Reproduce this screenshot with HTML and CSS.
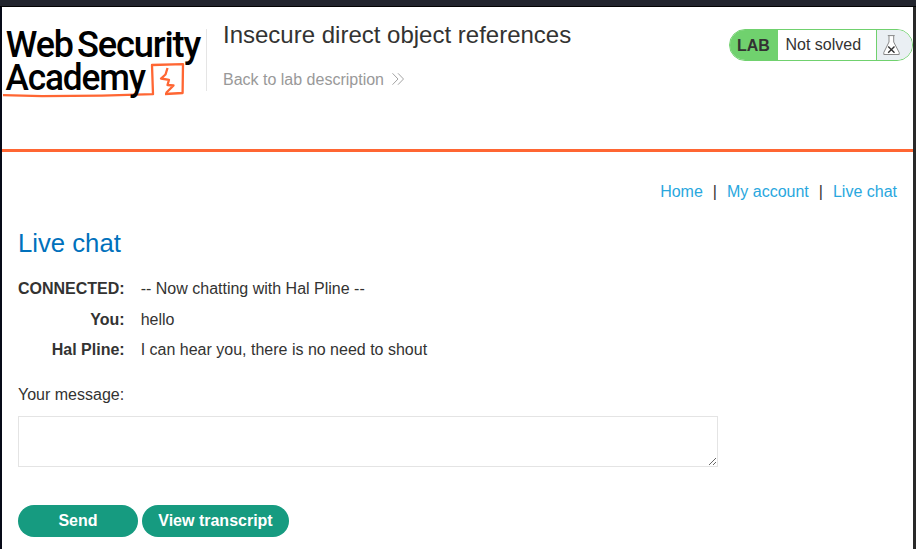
FILE: index.html
```html
<!DOCTYPE html>
<html lang="en">
<head>
<meta charset="utf-8">
<title>Insecure direct object references</title>
<link rel="stylesheet" href="styles.css">
</head>
<body>
<div class="window-edge"></div>
<div class="page">
  <header class="lab-header">
    <svg class="logo" width="204" height="74" viewBox="0 0 204 74" role="img" aria-label="Web Security Academy">
      <path class="logo-line" d="M1 66.2 L40 67.2 L100 66.6 L151 65.200 L150 36 L181 35.2 L180.6 64 L163 65"/>
      <path class="logo-bolt" d="M165.500 39 L163.500 45.500 L159 49.500 L167 50.800 L165.500 56 L171.500 56.500 L164 64"/>
      <text x="3.800" y="28.300" textLength="67" lengthAdjust="spacingAndGlyphs">Web</text>
      <text x="75" y="28.300" textLength="123" lengthAdjust="spacingAndGlyphs">Security</text>
      <text x="3.500" y="60.800" textLength="139.500" lengthAdjust="spacingAndGlyphs">Academy</text>
    </svg>
    <div class="title-box">
      <h2>Insecure direct object references</h2>
      <a class="back">Back to lab description
        <svg width="12" height="12" viewBox="0 0 12 12"><path d="M.5 .3 L6 6 L.5 11.700 M6 .3 L11.500 6 L6 11.700"/></svg>
      </a>
    </div>
    <div class="status">
      <span class="status-tag">LAB</span>
      <span class="status-text">Not solved</span>
      <span class="status-icon">
        <svg width="17" height="21" viewBox="0 0 17 21">
          <path class="flask" d="M4.800 .6 H11.700 M6 .6 V7 L.8 17.500 V19.500 H16.200 V17.500 L10.700 7 V.6"/>
          <path class="cross" d="M5.200 11.500 L11.500 17.700 M11.500 11.500 L5.200 17.700"/>
        </svg>
      </span>
    </div>
  </header>
  <main>
    <nav><a>Home</a><span>|</span><a>My account</a><span>|</span><a>Live chat</a></nav>
    <h1>Live chat</h1>
    <table>
      <tr><th>CONNECTED:</th><td>-- Now chatting with Hal Pline --</td></tr>
      <tr><th>You:</th><td>hello</td></tr>
      <tr><th>Hal Pline:</th><td>I can hear you, there is no need to shout</td></tr>
    </table>
    <label for="message">Your message:</label>
    <textarea id="message"></textarea>
    <div class="actions"><button class="send">Send</button><button>View transcript</button></div>
  </main>
</div>
</body>
</html>
```
FILE: styles.css
```css
* { box-sizing: border-box; }
body {
  margin: 0;
  height: 549px;
  overflow: hidden;
  background: #fff;
  color: #333332;
  font: 16px/20px "Liberation Sans", Arial, sans-serif;
}
.window-edge { height: 7px; background: #22252e; border-bottom: 1px solid #030303; }
.page { height: 542px; border-left: 2px solid #070a18; border-right: 3px solid #292929; }
.lab-header {
  display: flex;
  align-items: flex-start;
  height: 145px;
  padding-top: 22px;
  border-bottom: 3px solid #ff6633;
}
.logo { display: block; flex: none; overflow: visible; }
.logo text { font-family: Roboto, sans-serif; font-size: 37.5px; font-weight: 500; letter-spacing: -1.2px; fill: #000; }
.logo path { fill: none; stroke: #ff6633; stroke-width: 2.3; stroke-linejoin: round; }
.title-box { height: 62px; padding-left: 16px; border-left: 1px solid #e5e5e5; }
h2 { margin: -8px 0 0; font-size: 24px; font-weight: 400; line-height: 28px; white-space: nowrap; }
.back { display: flex; align-items: center; gap: 8.5px; margin-top: 21px; color: #999; line-height: 20px; }
.back svg { margin-top: -2px; fill: none; stroke: #999; stroke-width: .9; }
.status {
  display: flex;
  width: 184px;
  height: 32px;
  margin-left: auto;
  overflow: hidden;
  border: 1px solid #70d16e;
  border-radius: 16px;
  line-height: 30px;
}
.status-tag { width: 48px; padding-left: 7px; background: #70d16e; font-weight: 700; line-height: 32px; }
.status-text { flex: 1; padding-left: 7.500px; }
.status-icon { width: 36px; padding: 5px 0 0 6px; border-left: 1px solid #70d16e; background: #eaeff3; }
.status-icon svg { display: block; }
.status-icon path { fill: none; }
.status-icon .flask { fill: #fff; stroke: #888; stroke-width: 1; }
.cross { stroke: #333; stroke-width: 1.4; }
main { padding: 30px 16px 0; }
nav { display: flex; justify-content: flex-end; gap: 10px; }
nav a { color: #29a7de; }
h1 { margin: 26px 0 16px; color: #0071bc; font-size: 25.7px; font-weight: 400; line-height: 30px; }
table { border-collapse: collapse; }
th, td { height: 30.500px; padding: 0; }
th { text-align: right; }
td { padding-left: 16px; }
label { display: block; margin-top: 19px; }
textarea { display: block; width: 700px; height: 51px; margin: 11px 0 38px; border: 1px solid #e4e4e4; resize: both; outline: 0; }
.actions { display: flex; gap: 4px; }
button { height: 32px; width: 147px; padding: 0; border: 0; border-radius: 16px; background: #169b80; color: #fff; font: 700 16px/32px "Liberation Sans", Arial, sans-serif; }
.send { width: 120px; }
```
